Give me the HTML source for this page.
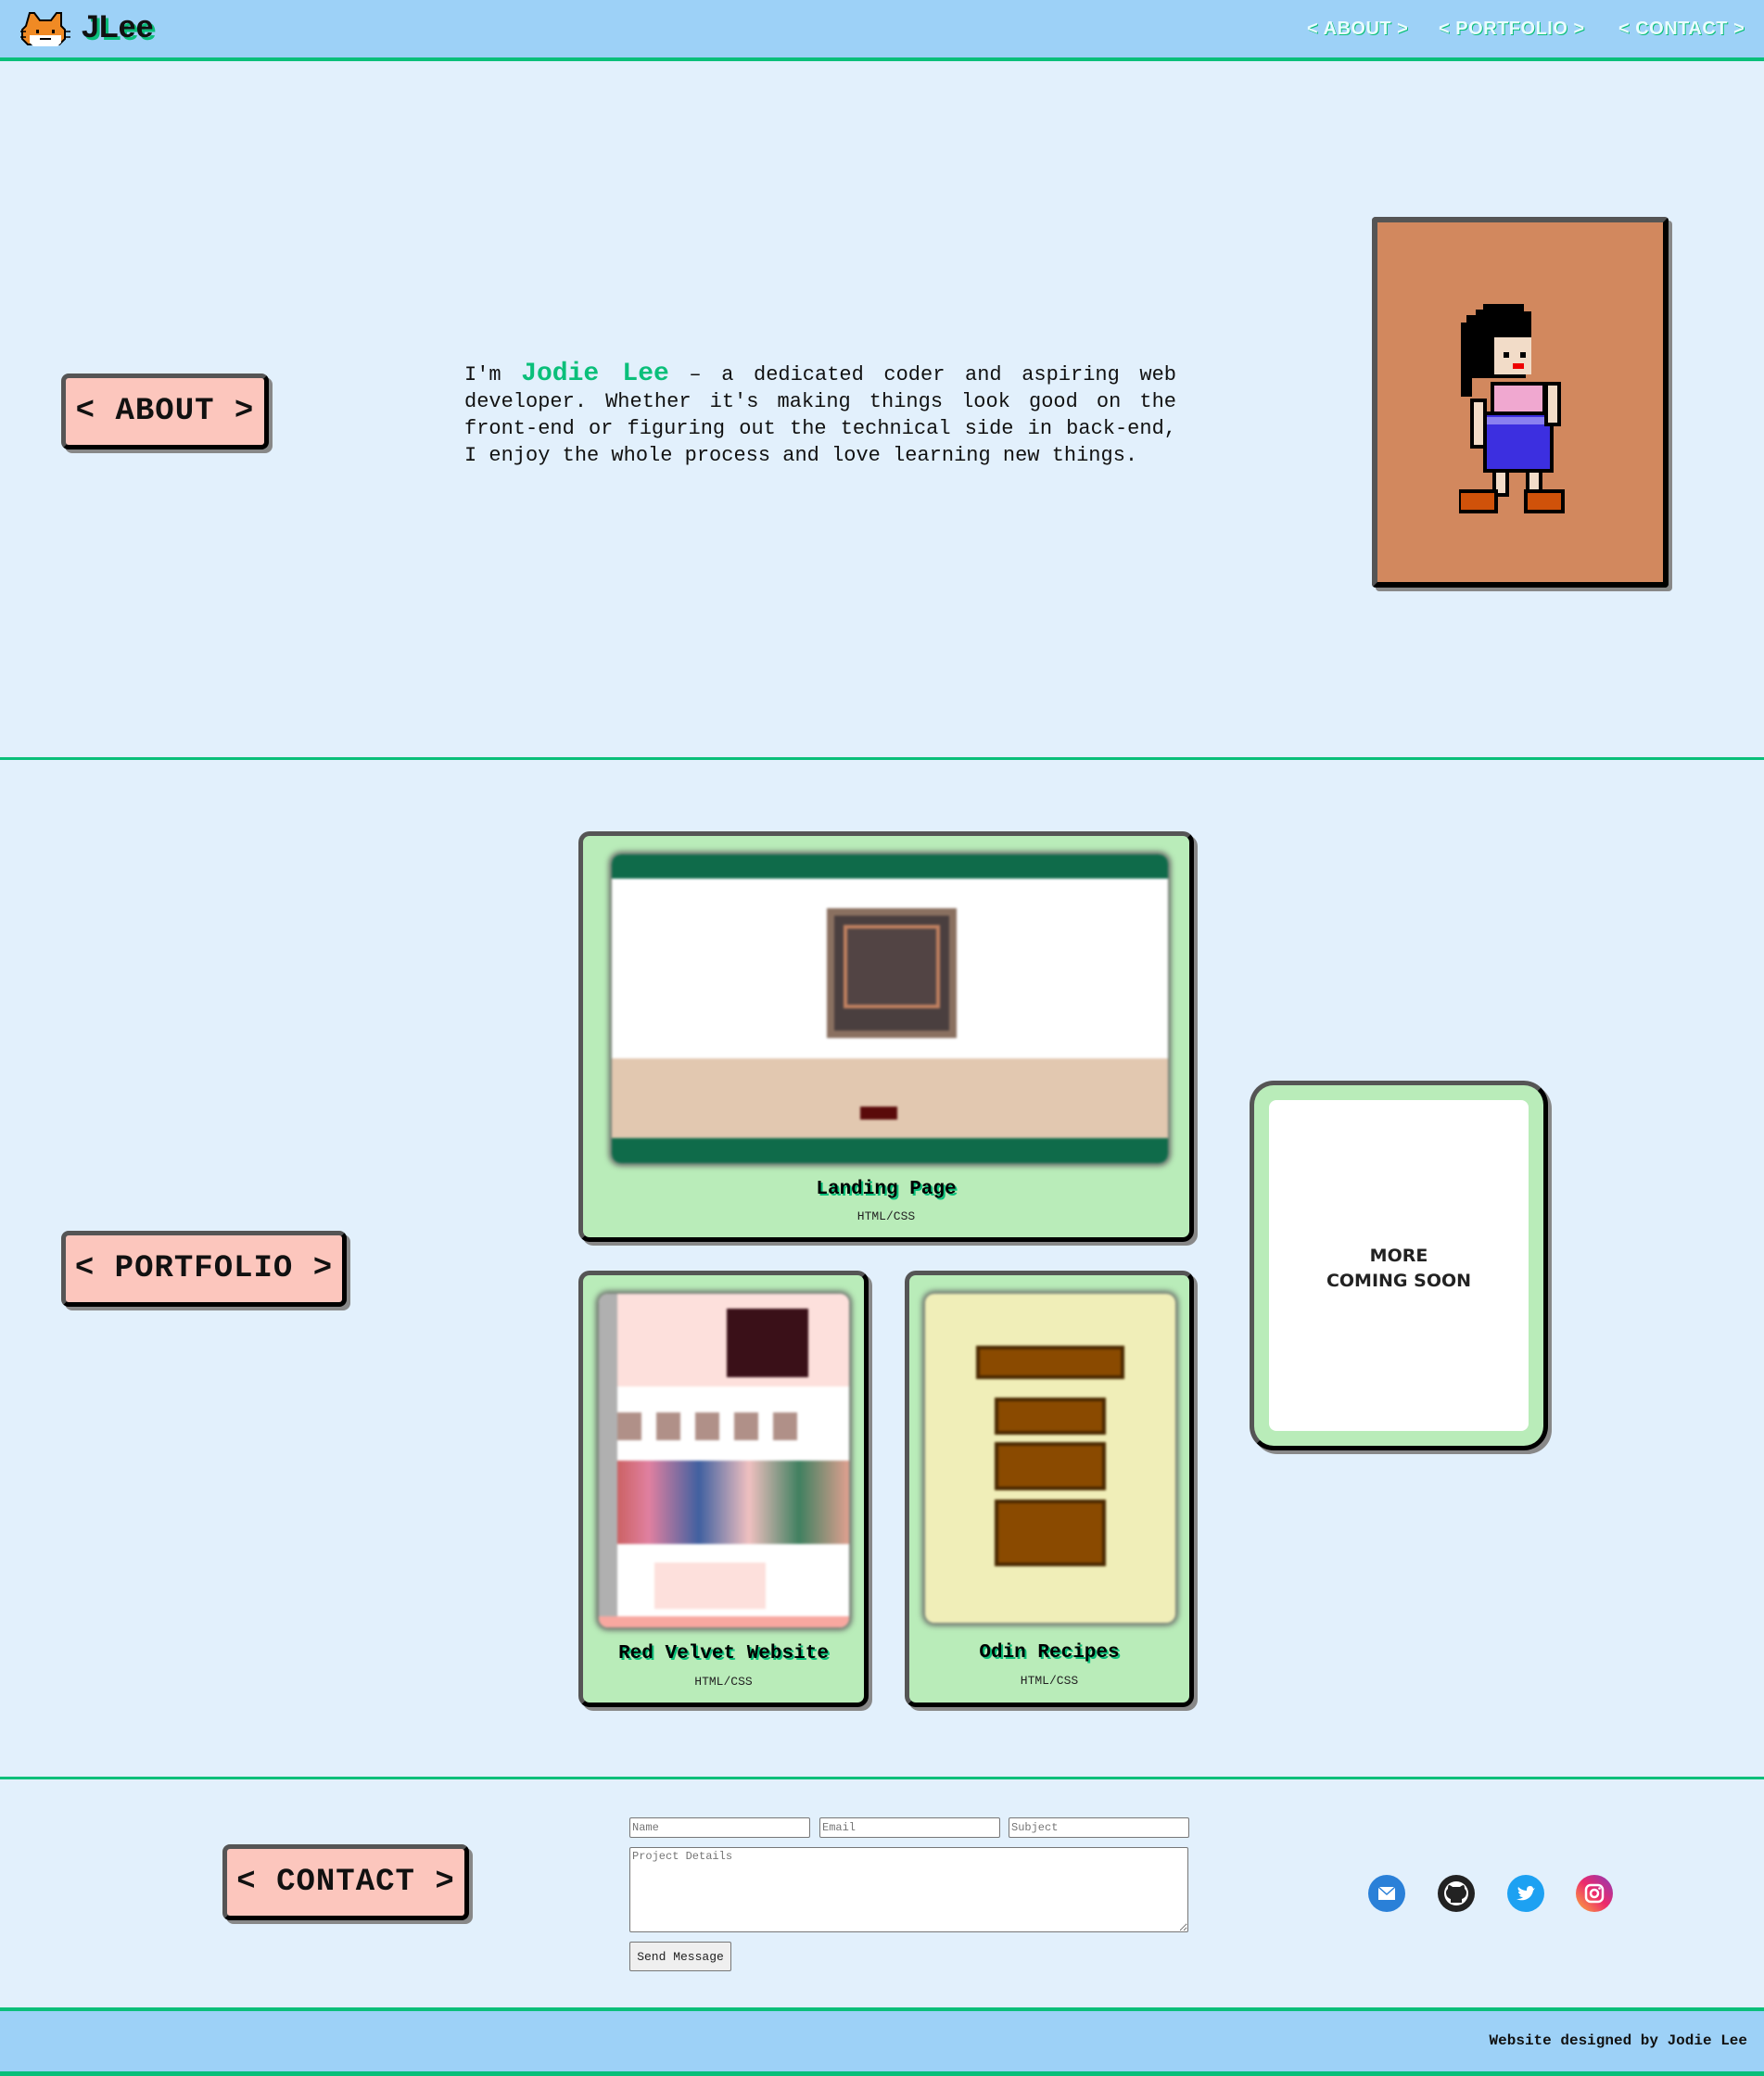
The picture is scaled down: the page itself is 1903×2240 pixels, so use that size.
<!DOCTYPE html>
<html><head><meta charset="utf-8"><style>
*{box-sizing:border-box;margin:0;padding:0}
body{width:1903px;height:2240px;position:relative;background:#e2f0fc;font-family:"Liberation Mono",monospace;overflow:hidden}
.abs{position:absolute}
.hdr{left:0;top:0;width:1903px;height:66px;background:#9dd1f7;border-bottom:4px solid #0abf7a}
.nav{top:20px;font-size:20px;color:#eafcff;text-shadow:1px 1px 0 #0abf7a;font-family:"Liberation Sans Narrow","Liberation Sans",sans-serif;font-weight:bold;letter-spacing:0.5px}
.line{left:0;width:1903px;height:3px;background:#0abf7a}
.btn{background:#fcc6bd;border:5px solid;border-color:#555 #000 #000 #555;border-radius:8px;box-shadow:4px 4px 0 #888;font-weight:bold;font-size:34px;display:flex;align-items:center;justify-content:center;color:#111;font-family:"Liberation Mono",monospace;letter-spacing:1px}
.card{background:#b9ecb9;border:5px solid;border-color:#555 #000 #000 #555;border-radius:12px;box-shadow:4px 4px 0 #888}
.shot{position:absolute;border-radius:10px;overflow:hidden;box-shadow:0 0 6px 3px #666;filter:blur(1.2px)}
.ttl{position:absolute;left:0;right:0;text-align:center;font-weight:bold;font-size:21px;color:#000;text-shadow:2px 2px 0 #0abf7a}
.sub{position:absolute;left:0;right:0;text-align:center;font-size:13px;color:#222}
input,textarea{position:absolute;border:1px solid #777;border-radius:2px;background:#fff;font-family:"Liberation Mono",monospace;font-size:12px;padding:2px;color:#888}
.ic{position:absolute;top:2023px;width:40px;height:40px;border-radius:50%}
</style></head><body>
<div class="abs hdr"></div>
<svg class="abs" style="left:22px;top:12px" width="54" height="40" viewBox="0 0 54 40">
<path d="M10 2h5l6 8h12l6-8h5v14l4 4v10l-6 6H8l-6-6V20l4-4z" fill="#f08a24" stroke="#000" stroke-width="2"/>
<path d="M10 26h34v8l-4 4H14l-4-4z" fill="#fff"/>
<rect x="17" y="20" width="3" height="4" fill="#000"/><rect x="34" y="20" width="3" height="4" fill="#000"/>
<path d="M21 30h12" stroke="#000" stroke-width="2"/><path d="M0 22h6M0 28h6M48 22h6M48 28h6" stroke="#000" stroke-width="1.5"/>
</svg>
<div class="abs" style="left:88px;top:10px;font-family:'Liberation Sans',sans-serif;font-weight:bold;font-size:34px;color:#111;text-shadow:3px 3px 0 #0abf7a">JLee</div>
<div class="abs nav" style="left:1410px">&lt; ABOUT &gt;</div>
<div class="abs nav" style="left:1552px">&lt; PORTFOLIO &gt;</div>
<div class="abs nav" style="left:1746px">&lt; CONTACT &gt;</div>

<div class="abs btn" style="left:66px;top:403px;width:224px;height:82px">&lt; ABOUT &gt;</div>
<div class="abs" style="left:501px;top:389px;width:768px;font-size:22px;line-height:29px;text-align:justify;color:#111">I'm <span style="color:#0abf7a;font-weight:bold;font-size:28px">Jodie Lee</span> – a dedicated coder and aspiring web developer. Whether it's making things look good on the front-end or figuring out the technical side in back-end, I enjoy the whole process and love learning new things.</div>

<div class="abs" style="left:1480px;top:234px;width:320px;height:400px;background:#d2885e;border:6px solid;border-color:#555 #000 #000 #555;border-radius:4px;box-shadow:4px 4px 0 #888"></div>
<svg class="abs" style="left:1574px;top:322px" width="126" height="232" viewBox="0 0 126 232" shape-rendering="crispEdges">
<path d="M18 12h8v-6h44v8h8v50h-6v22H14v20H2V26h6v-8h10z" fill="#000"/>
<rect x="38" y="42" width="40" height="40" fill="#f2dcc8"/>
<rect x="48" y="58" width="6" height="6" fill="#000"/><rect x="66" y="58" width="6" height="6" fill="#000"/>
<rect x="58" y="70" width="12" height="6" fill="#e00"/>
<rect x="36" y="92" width="56" height="36" fill="#f0a8d0" stroke="#000" stroke-width="4"/>
<rect x="28" y="124" width="72" height="62" fill="#3c2fe0" stroke="#000" stroke-width="4"/>
<rect x="30" y="128" width="68" height="8" fill="#8a80f0"/>
<rect x="14" y="110" width="14" height="50" fill="#f2dcc8" stroke="#000" stroke-width="4"/>
<rect x="94" y="92" width="14" height="44" fill="#f2dcc8" stroke="#000" stroke-width="4"/>
<rect x="38" y="186" width="14" height="26" fill="#f2dcc8" stroke="#000" stroke-width="4"/>
<rect x="74" y="186" width="14" height="26" fill="#f2dcc8" stroke="#000" stroke-width="4"/>
<rect x="0" y="208" width="40" height="22" fill="#d0520a" stroke="#000" stroke-width="4"/>
<rect x="72" y="208" width="40" height="22" fill="#d0520a" stroke="#000" stroke-width="4"/>
</svg>

<div class="abs line" style="top:817px"></div>

<div class="abs btn" style="left:66px;top:1328px;width:308px;height:82px">&lt; PORTFOLIO &gt;</div>

<div class="abs card" style="left:624px;top:897px;width:664px;height:443px">
 <div class="shot" style="left:31px;top:20px;width:600px;height:333px;background:#fff">
  <div style="height:26px;background:#0f6b4a"></div>
  <div style="position:absolute;left:232px;top:58px;width:140px;height:140px;background:#4a3f3f;border:8px solid #8a7060"><div style="margin:10px;height:90px;border:4px solid #c08060;background:#524444"></div></div>
  <div style="position:absolute;left:0;top:220px;width:600px;height:86px;background:#e2c8b0"></div>
  <div style="position:absolute;left:268px;top:272px;width:40px;height:14px;background:#5a0a0a"></div>
  <div style="position:absolute;left:0;top:306px;width:600px;height:27px;background:#0f6b4a"></div>
 </div>
 <div class="ttl" style="top:370px">Landing Page</div>
 <div class="sub" style="top:403px">HTML/CSS</div>
</div>

<div class="abs card" style="left:624px;top:1371px;width:313px;height:471px">
 <div class="shot" style="left:17px;top:20px;width:270px;height:360px;background:#fff">
  <div style="height:100px;background:#fde0dc"></div>
  <div style="position:absolute;left:138px;top:16px;width:88px;height:74px;background:#3a1018"></div>
  <div style="position:absolute;left:20px;top:128px;width:200px;height:30px;background:repeating-linear-gradient(90deg,#b09088 0 26px,#fff 26px 42px)"></div>
  <div style="position:absolute;left:0;top:180px;width:270px;height:90px;background:linear-gradient(90deg,#c05040,#e080a0,#4060a0,#f0c0c0,#408060,#e0a090)"></div>
  <div style="position:absolute;left:0;top:0;width:20px;height:360px;background:#b0b0b0"></div>
  <div style="position:absolute;left:60px;top:290px;width:120px;height:50px;background:#fde0dc"></div>
  <div style="position:absolute;left:0;top:348px;width:270px;height:12px;background:#f8a8a0"></div>
 </div>
 <div class="ttl" style="top:397px">Red Velvet Website</div>
 <div class="sub" style="top:431px">HTML/CSS</div>
</div>

<div class="abs card" style="left:976px;top:1371px;width:312px;height:471px">
 <div class="shot" style="left:17px;top:20px;width:270px;height:355px;background:#f0eeb8">
  <div style="position:absolute;left:55px;top:56px;width:160px;height:36px;background:#8a4a00;border:4px solid #4a2800"></div>
  <div style="position:absolute;left:75px;top:112px;width:120px;height:40px;background:#8a4a00;border:4px solid #4a2800"></div>
  <div style="position:absolute;left:75px;top:160px;width:120px;height:52px;background:#8a4a00;border:4px solid #4a2800"></div>
  <div style="position:absolute;left:75px;top:222px;width:120px;height:72px;background:#8a4a00;border:4px solid #4a2800"></div>
 </div>
 <div class="ttl" style="top:396px">Odin Recipes</div>
 <div class="sub" style="top:430px">HTML/CSS</div>
</div>

<div class="abs" style="left:1348px;top:1166px;width:322px;height:399px;background:#b9ecb9;border:5px solid;border-color:#555 #000 #000 #555;border-radius:26px;box-shadow:4px 4px 0 #888">
 <div style="position:absolute;left:16px;top:16px;right:16px;bottom:16px;background:#fff;border-radius:8px;display:flex;align-items:center;justify-content:center;text-align:center;font-family:'DejaVu Sans',sans-serif;font-weight:bold;font-size:19px;line-height:27px;color:#222;padding-top:6px">MORE<br>COMING SOON</div>
</div>

<div class="abs line" style="top:1917px"></div>

<div class="abs btn" style="left:240px;top:1990px;width:266px;height:82px">&lt; CONTACT &gt;</div>
<input style="left:679px;top:1961px;width:195px;height:22px" placeholder="Name">
<input style="left:884px;top:1961px;width:195px;height:22px" placeholder="Email">
<input style="left:1088px;top:1961px;width:195px;height:22px" placeholder="Subject">
<textarea style="left:679px;top:1993px;width:603px;height:92px" placeholder="Project Details"></textarea>
<div class="abs" style="left:679px;top:2095px;width:110px;height:32px;background:#efefef;border:1px solid #777;border-radius:2px;font-size:13px;display:flex;align-items:center;justify-content:center;color:#222">Send Message</div>

<div class="ic" style="left:1476px;background:#2a80d8"><svg width="40" height="40"><rect x="11" y="13" width="18" height="14" fill="#fff"/><path d="M11 13l9 8 9-8" stroke="#2a80d8" fill="none" stroke-width="1.5"/></svg></div>
<div class="ic" style="left:1551px;background:#222"><svg width="40" height="40"><circle cx="20" cy="20" r="13" fill="#fff"/><path d="M14 30v-4c-3-1-5-3-5-7 0-2 1-3 2-4 0-1 0-3 1-4 1 0 3 1 4 2h8c1-1 3-2 4-2 1 1 1 3 1 4 1 1 2 2 2 4 0 4-2 6-5 7v4z" fill="#222"/></svg></div>
<div class="ic" style="left:1626px;background:#1da1f2"><svg width="40" height="40"><path d="M10 26c6 3 16 1 18-9l2-3-2 1c0-3-4-4-6-2-1 1-1 3-1 4-4 0-7-2-9-4-1 2 0 4 2 5l-2 0c0 2 2 3 3 4h-2c1 2 3 2 4 2-2 2-5 2-7 2z" fill="#fff"/></svg></div>
<div class="ic" style="left:1700px;background:linear-gradient(45deg,#fbb03b,#ed2a6b 50%,#8a3ab9)"><svg width="40" height="40"><rect x="11" y="11" width="18" height="18" rx="5" fill="none" stroke="#fff" stroke-width="2.5"/><circle cx="20" cy="20" r="4" fill="none" stroke="#fff" stroke-width="2.5"/><circle cx="25.5" cy="14.5" r="1.3" fill="#fff"/></svg></div>

<div class="abs line" style="top:2166px;height:4px"></div>
<div class="abs" style="left:0;top:2170px;width:1903px;height:65px;background:#9dd1f7"></div>
<div class="abs line" style="top:2235px;height:5px"></div>
<div class="abs" style="right:18px;top:2193px;font-size:16px;font-weight:bold;color:#111">Website designed by Jodie Lee</div>
</body></html>
